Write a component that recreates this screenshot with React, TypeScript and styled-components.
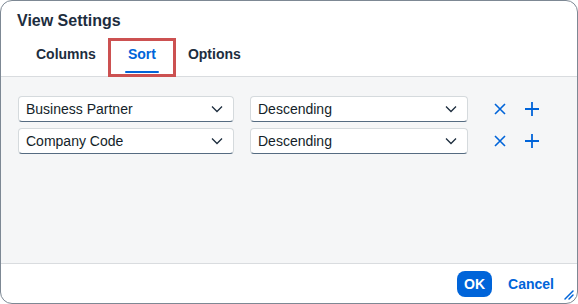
import React from "react";
import styled, { createGlobalStyle } from "styled-components";

const Global = createGlobalStyle`
  html, body { margin: 0; padding: 0; background: #ffffff; }
  body { font-family: "Liberation Sans", Arial, sans-serif; }
  * { box-sizing: border-box; }
`;

const Dialog = styled.div`
  width: 578px;
  height: 304px;
  border: 1px solid #7d8894;
  border-radius: 12px;
  background: #ffffff;
  display: flex;
  flex-direction: column;
  overflow: hidden;
  position: relative;
`;

const Header = styled.div`
  display: flex;
  flex-direction: column;
  border-bottom: 1px solid #d9dcdf;
  height: 76px;
`;

const Title = styled.h1`
  margin: 0;
  padding: 11px 0 0 16px;
  font-size: 16px;
  font-weight: 700;
  color: #1d2d3e;
  line-height: 18px;
`;

const TabBar = styled.div`
  display: flex;
  margin-top: 16px;
  padding-left: 19px;
`;

const Tab = styled.div<{ $active?: boolean }>`
  position: relative;
  height: 30px;
  padding: 0 16px;
  font-size: 14px;
  font-weight: 700;
  color: ${(p) => (p.$active ? "#0064d9" : "#1d2d3e")};
  line-height: 16px;
  &::after {
    content: "";
    display: ${(p) => (p.$active ? "block" : "none")};
    position: absolute;
    left: 13px;
    right: 13px;
    bottom: 3px;
    height: 2px;
    border-radius: 1px;
    background: #0064d9;
  }
`;

const Highlight = styled.div`
  position: absolute;
  left: -4px;
  right: -4px;
  top: -8px;
  bottom: -1px;
  border: 3px solid #cc5151;
  pointer-events: none;
`;

const Content = styled.div`
  flex: 1;
  background: #f5f6f7;
  padding: 19px 0 0 17px;
  display: flex;
  flex-direction: column;
  gap: 6px;
  border-bottom: 1px solid #d9dcdf;
`;

const Row = styled.div`
  display: grid;
  grid-template-columns: 216px 218px auto;
  column-gap: 16px;
  align-items: center;
`;

const Select = styled.div`
  height: 26px;
  background: #ffffff;
  border: 1px solid #d5dadd;
  border-bottom-color: #556b81;
  border-radius: 4px;
  display: flex;
  align-items: center;
  justify-content: space-between;
  padding: 0 10px 0 7px;
  font-size: 14px;
  color: #131e29;
`;

const Actions = styled.div`
  display: flex;
  align-items: center;
  gap: 6px;
  margin-left: 3px;
`;

const IconButton = styled.button`
  width: 26px;
  height: 26px;
  padding: 0;
  border: none;
  background: transparent;
  display: flex;
  align-items: center;
  justify-content: center;
  color: #0064d9;
`;

const Footer = styled.div`
  height: 39px;
  display: flex;
  align-items: center;
  justify-content: flex-end;
  padding-right: 23px;
  gap: 16px;
`;

const OkButton = styled.button`
  width: 35px;
  height: 26px;
  border: none;
  border-radius: 8px;
  background: #0064d9;
  color: #ffffff;
  font-family: inherit;
  font-weight: 700;
  font-size: 14px;
  padding: 0;
`;

const TextButton = styled.button`
  border: none;
  background: transparent;
  color: #0064d9;
  font-family: inherit;
  font-weight: 700;
  font-size: 14px;
  padding: 0;
`;

const Grip = styled.svg`
  position: absolute;
  right: 2px;
  bottom: 2px;
`;

const Chevron = () => (
  <svg width="12" height="8" viewBox="0 0 12 8">
    <path d="M1 1.5 L6 6.5 L11 1.5" fill="none" stroke="#1d2d3e" strokeWidth="1.3" />
  </svg>
);

const XIcon = () => (
  <svg width="12" height="12" viewBox="0 0 12 12">
    <path d="M1 1 L11 11 M11 1 L1 11" fill="none" stroke="currentColor" strokeWidth="1.6" />
  </svg>
);

const PlusIcon = () => (
  <svg width="16" height="16" viewBox="0 0 16 16">
    <path d="M8 1 V15 M1 8 H15" fill="none" stroke="currentColor" strokeWidth="1.8" />
  </svg>
);

const rows = [
  { field: "Business Partner", order: "Descending" },
  { field: "Company Code", order: "Descending" },
];

export default function App() {
  return (
    <>
      <Global />
      <Dialog>
        <Header>
          <Title>View Settings</Title>
          <TabBar>
            <Tab>Columns</Tab>
            <Tab $active>
              Sort
              <Highlight />
            </Tab>
            <Tab>Options</Tab>
          </TabBar>
        </Header>
        <Content>
          {rows.map((r) => (
            <Row key={r.field}>
              <Select>
                <span>{r.field}</span>
                <Chevron />
              </Select>
              <Select>
                <span>{r.order}</span>
                <Chevron />
              </Select>
              <Actions>
                <IconButton aria-label="Remove">
                  <XIcon />
                </IconButton>
                <IconButton aria-label="Add">
                  <PlusIcon />
                </IconButton>
              </Actions>
            </Row>
          ))}
        </Content>
        <Footer>
          <OkButton>OK</OkButton>
          <TextButton>Cancel</TextButton>
        </Footer>
        <Grip width="12" height="12" viewBox="0 0 12 12">
          <path d="M2 10 L10 2 M6 10 L10 6" stroke="#0064d9" strokeWidth="1.5" strokeLinecap="round" />
        </Grip>
      </Dialog>
    </>
  );
}
